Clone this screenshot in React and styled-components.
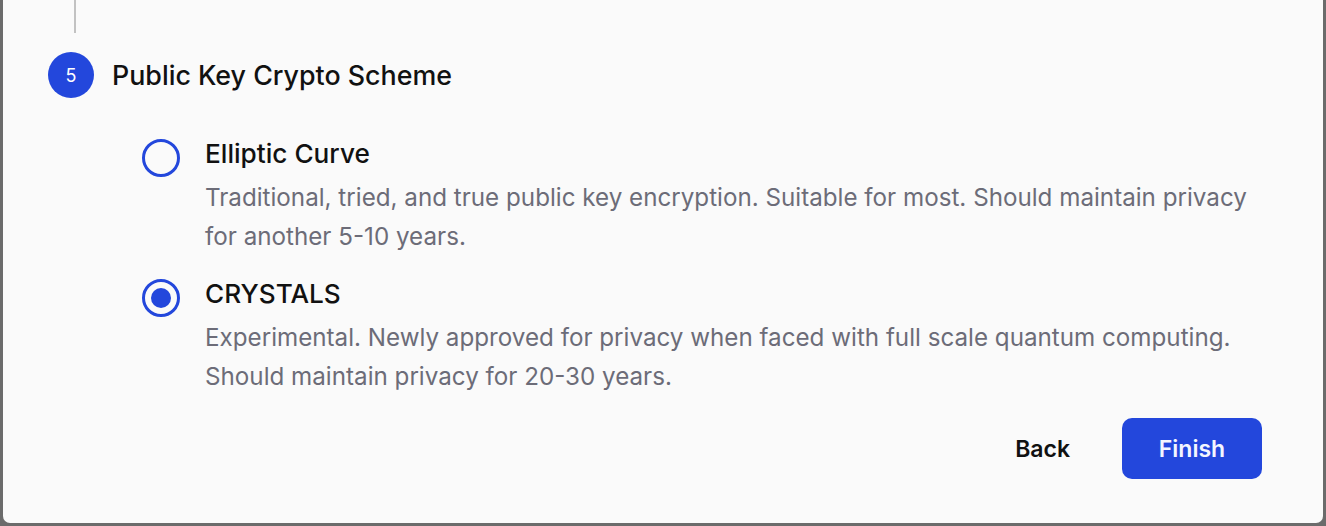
import React from 'react'
import styled, { createGlobalStyle } from 'styled-components'

const GlobalStyle = createGlobalStyle`
  html, body {
    margin: 0;
    padding: 0;
    background: #6b6b6b;
  }
  body {
    font-family: Inter, "Noto Sans", "Liberation Sans", sans-serif;
    -webkit-font-smoothing: antialiased;
  }
`

const Frame = styled.div`
  width: 1326px;
  height: 526px;
  padding: 0 3px 3px 3px;
  box-sizing: border-box;
  background: #6b6b6b;
`

const Panel = styled.div`
  height: 100%;
  box-sizing: border-box;
  background: #fafafa;
  border-radius: 0 0 7px 7px;
  padding: 0 61px 44px 45px;
  display: flex;
  flex-direction: column;
`

const Rail = styled.div`
  width: 2px;
  height: 33px;
  margin-left: 26px;
  background: #c2c2c2;
`

const StepHeader = styled.div`
  display: flex;
  align-items: center;
  gap: 18px;
  margin-top: 19px;
`

const StepBadge = styled.div`
  width: 46px;
  height: 46px;
  border-radius: 50%;
  background: #2347dc;
  color: #fff;
  font-size: 18px;
  display: flex;
  align-items: center;
  justify-content: center;
`

const StepTitle = styled.h2`
  margin: 0;
  font-size: 26.8px;
  line-height: 32px;
  font-weight: 500;
  color: #111;
`

const OptionList = styled.div`
  display: flex;
  flex-direction: column;
  gap: 22px;
  margin: 40px 0 0 94px;
`

const Option = styled.label`
  display: grid;
  grid-template-columns: 38px 1fr;
  column-gap: 25px;
  cursor: pointer;
`

const Radio = styled.span`
  width: 38px;
  height: 38px;
  margin-top: 1px;
  box-sizing: border-box;
  border-radius: 50%;
  border: 3.5px solid #2347dc;
  display: flex;
  align-items: center;
  justify-content: center;
  &::after {
    content: '';
    width: 20px;
    height: 20px;
    border-radius: 50%;
    background: #2347dc;
    display: ${p => (p.$checked ? 'block' : 'none')};
  }
`

const OptionBody = styled.div`
  display: flex;
  flex-direction: column;
  gap: 8px;
`

const OptionTitle = styled.div`
  font-size: 26.2px;
  line-height: 32px;
  font-weight: 500;
  color: #111;
`

const OptionDesc = styled.p`
  margin: 0;
  font-size: 24.2px;
  line-height: 39px;
  color: #6c6c78;
`

const Footer = styled.div`
  display: flex;
  justify-content: flex-end;
  gap: 24px;
  margin-top: 22px;
`

const Button = styled.button`
  height: 61px;
  min-width: ${p => (p.$primary ? '140px' : 'auto')};
  padding: 0 ${p => (p.$primary ? '30px' : '28px')};
  border: none;
  border-radius: 10px;
  font-family: inherit;
  font-size: 23px;
  font-weight: 600;
  cursor: pointer;
  background: ${p => (p.$primary ? '#2347dc' : 'transparent')};
  color: ${p => (p.$primary ? '#f4f6ff' : '#111')};
`

const options = [
  {
    id: 'ec',
    title: 'Elliptic Curve',
    desc: 'Traditional, tried, and true public key encryption. Suitable for most. Should maintain privacy for another 5-10 years.',
  },
  {
    id: 'crystals',
    title: 'CRYSTALS',
    desc: 'Experimental. Newly approved for privacy when faced with full scale quantum computing. Should maintain privacy for 20-30 years.',
  },
]

const App = () => {
  const [selected, setSelected] = React.useState('crystals')
  return (
    <>
      <GlobalStyle />
      <Frame>
        <Panel>
          <Rail />
          <StepHeader>
            <StepBadge>5</StepBadge>
            <StepTitle>Public Key Crypto Scheme</StepTitle>
          </StepHeader>
          <OptionList>
            {options.map(o => (
              <Option key={o.id} onClick={() => setSelected(o.id)}>
                <Radio $checked={selected === o.id} />
                <OptionBody>
                  <OptionTitle>{o.title}</OptionTitle>
                  <OptionDesc>{o.desc}</OptionDesc>
                </OptionBody>
              </Option>
            ))}
          </OptionList>
          <Footer>
            <Button>Back</Button>
            <Button $primary>Finish</Button>
          </Footer>
        </Panel>
      </Frame>
    </>
  )
}

export default App
